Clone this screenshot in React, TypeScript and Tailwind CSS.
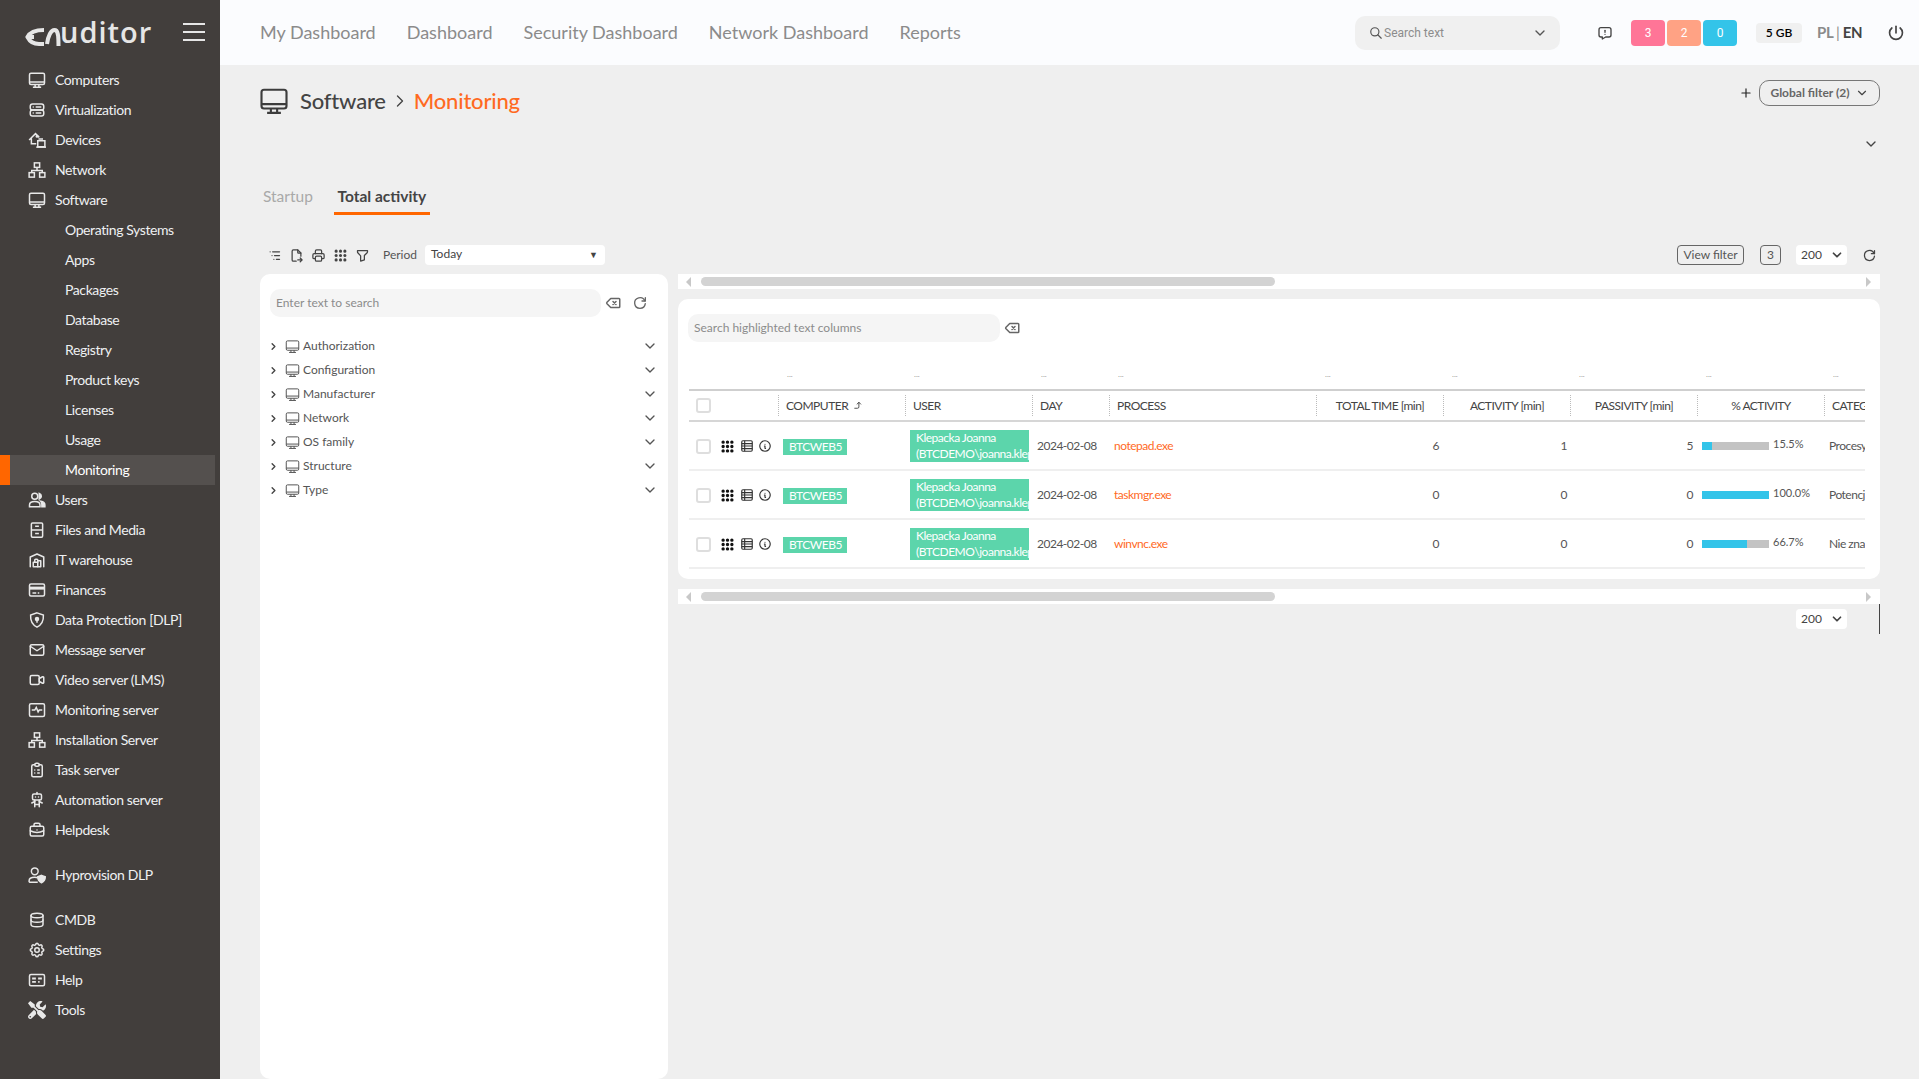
import type { ComponentType, ReactNode } from "react"
import {
  TbBuildingWarehouse,
  TbMail,
  TbVideo,
  TbClipboardList,
  TbRobot,
  TbBriefcase,
  TbDatabase,
  TbSettings,
  TbServer2,
  TbBackspace,
  TbReload,
  TbListTree,
  TbFileExport,
  TbPrinter,
  TbGridDots,
  TbFilter,
  TbInfoCircle,
  TbPower,
  TbMessageReport,
  TbSearch,
  TbChevronDown,
  TbChevronRight,
  TbPlus,
  TbCornerRightUp,
} from "react-icons/tb"
import { FaTools } from "react-icons/fa"

type IconT = ComponentType<{ size?: number; className?: string; strokeWidth?: number }>
type SvgProps = { size?: number; className?: string; strokeWidth?: number }

function svgProps({ size = 18, className, strokeWidth = 2 }: SvgProps) {
  return {
    width: size,
    height: size,
    viewBox: "0 0 24 24",
    fill: "none",
    stroke: "currentColor",
    strokeWidth,
    className,
  }
}

function DesktopIcon(p: SvgProps) {
  return (
    <svg {...svgProps(p)}>
      <rect x="2" y="3" width="20" height="15" rx="2" />
      <path d="M2 14.5h20M9.5 18v3M14.5 18v3M6.5 21.5h11" />
    </svg>
  )
}

function SitemapIcon(p: SvgProps) {
  return (
    <svg {...svgProps(p)}>
      <rect x="8.5" y="2.5" width="7" height="6" />
      <rect x="1.5" y="15.5" width="7" height="6" />
      <rect x="15.5" y="15.5" width="7" height="6" />
      <path d="M12 8.5v4M5 15.5v-3h14v3" />
    </svg>
  )
}

function DevicesIcon(p: SvgProps) {
  return (
    <svg {...svgProps(p)}>
      <path d="M1.5 12L10 3.5l5 5M4.5 10v7H11" />
      <circle cx="12" cy="7" r="1" />
      <path d="M15 11.5v-1h4v1" />
      <rect x="13" y="13" width="9.5" height="8" />
      <path d="M11 21.5h13" />
    </svg>
  )
}

function UsersIcon(p: SvgProps) {
  return (
    <svg {...svgProps(p)}>
      <circle cx="9" cy="7" r="4" />
      <path d="M2 21v-2.5C2 15.5 5 14 9 14s7 1.500 7 4.500V21z" />
      <path d="M15 3.200a4 4 0 0 1 0 7.600z" fill="currentColor" />
      <path d="M17 13.500c3 .5 5.500 2 5.500 5V21H18.500v-3c0-2-.5-3.500-1.500-4.500z" fill="currentColor" />
    </svg>
  )
}

function FilesIcon(p: SvgProps) {
  return (
    <svg {...svgProps(p)}>
      <rect x="4.500" y="2.500" width="15" height="19" rx="1.500" />
      <path d="M4.500 12h15M9.500 7h5M9.500 16.500h5" />
    </svg>
  )
}

function CardIcon(p: SvgProps) {
  return (
    <svg {...svgProps(p)}>
      <rect x="2" y="4" width="20" height="16" rx="2" />
      <path d="M2 9.500h20" strokeWidth="4" />
      <path d="M6 16h5M13 16h2" />
    </svg>
  )
}

function ShieldIcon(p: SvgProps) {
  return (
    <svg {...svgProps(p)}>
      <path d="M12 2.500l8.500 3c.5 7.500-2.500 13-8.500 16-6-3-9-8.500-8.500-16z" />
      <circle cx="12" cy="10.500" r="2" fill="currentColor" />
      <path d="M12 12v3.500" />
    </svg>
  )
}

function PulseIcon(p: SvgProps) {
  return (
    <svg {...svgProps(p)}>
      <rect x="2" y="3.500" width="20" height="17" rx="2" />
      <path d="M5 12h4l2-3.500 2.500 6 1.500-2.500h4" />
    </svg>
  )
}

function HyproIcon(p: SvgProps) {
  return (
    <svg {...svgProps(p)}>
      <circle cx="9" cy="7" r="4.500" />
      <path d="M1.500 21.500v-2c0-3 3-4.500 7.500-4.500 1.500 0 3 .2 4 .6M1.500 21.500H13" />
      <path d="M18 12.500l5 1.800c0 4-1.500 6.500-5 8-3.500-1.500-5-4-5-8z" fill="currentColor" />
    </svg>
  )
}

function HelpIcon(p: SvgProps) {
  return (
    <svg {...svgProps(p)}>
      <rect x="2" y="4.500" width="20" height="15" rx="2" />
      <path d="M5.500 10h5M5.500 14.500h5M13.500 10h5M13.500 14.500h2" strokeWidth="2.500" />
    </svg>
  )
}

function TableIcon(p: SvgProps) {
  return (
    <svg {...svgProps(p)}>
      <rect x="3" y="3" width="18" height="18" rx="2" />
      <path d="M3 8h18M3 12h18M3 16.500h18M8 3v18" />
    </svg>
  )
}

function ToolsIcon({ size = 15 }: SvgProps) {
  return <FaTools size={size} />
}

const menu: { label: string; icon?: IconT; sub?: boolean; active?: boolean; gap?: boolean }[] = [
  { label: "Computers", icon: DesktopIcon },
  { label: "Virtualization", icon: TbServer2 },
  { label: "Devices", icon: DevicesIcon },
  { label: "Network", icon: SitemapIcon },
  { label: "Software", icon: DesktopIcon },
  { label: "Operating Systems", sub: true },
  { label: "Apps", sub: true },
  { label: "Packages", sub: true },
  { label: "Database", sub: true },
  { label: "Registry", sub: true },
  { label: "Product keys", sub: true },
  { label: "Licenses", sub: true },
  { label: "Usage", sub: true },
  { label: "Monitoring", sub: true, active: true },
  { label: "Users", icon: UsersIcon },
  { label: "Files and Media", icon: FilesIcon },
  { label: "IT warehouse", icon: TbBuildingWarehouse },
  { label: "Finances", icon: CardIcon },
  { label: "Data Protection [DLP]", icon: ShieldIcon },
  { label: "Message server", icon: TbMail },
  { label: "Video server (LMS)", icon: TbVideo },
  { label: "Monitoring server", icon: PulseIcon },
  { label: "Installation Server", icon: SitemapIcon },
  { label: "Task server", icon: TbClipboardList },
  { label: "Automation server", icon: TbRobot },
  { label: "Helpdesk", icon: TbBriefcase },
  { label: "Hyprovision DLP", icon: HyproIcon, gap: true },
  { label: "CMDB", icon: TbDatabase, gap: true },
  { label: "Settings", icon: TbSettings },
  { label: "Help", icon: HelpIcon },
  { label: "Tools", icon: ToolsIcon },
]

const treeItems = ["Authorization", "Configuration", "Manufacturer", "Network", "OS family", "Structure", "Type"]

const rows = [
  { process: "notepad.exe", total: 6, activity: 1, passivity: 5, pct: 15.5, category: "Procesy" },
  { process: "taskmgr.exe", total: 0, activity: 0, passivity: 0, pct: 100, category: "Potencjalne" },
  { process: "winvnc.exe", total: 0, activity: 0, passivity: 0, pct: 66.7, category: "Nie znane" },
]

const columns = [
  { w: "w-[89px]", label: "" },
  { w: "w-[127px]", label: "COMPUTER" },
  { w: "w-[127px]", label: "USER" },
  { w: "w-[77px]", label: "DAY" },
  { w: "w-[207px]", label: "PROCESS" },
  { w: "w-[127px]", label: "TOTAL TIME [min]", center: true },
  { w: "w-[127px]", label: "ACTIVITY [min]", center: true },
  { w: "w-[127px]", label: "PASSIVITY [min]", center: true },
  { w: "w-[127px]", label: "% ACTIVITY", center: true },
  { w: "w-[41px]", label: "CATEGORY" },
]

function Logo() {
  return (
    <div className="flex items-center h-[65px] pl-[25px] pr-[15px] justify-between">
      <div className="flex items-center text-[#e6e6e6]">
        <svg width="36" height="18" viewBox="0 0 36 18" fill="none" stroke="currentColor" strokeWidth="4" className="mt-[9px]">
          <path d="M19 2C11 2 5 4 2.500 9C5 14 10 16 14 16H19" />
          <path d="M2.500 9H9" />
          <path d="M22 16C23 8 26 2 29.500 2C33 2 33.500 7 33.500 18" />
        </svg>
        <span className="font-['Open_Sans',sans-serif] font-semibold text-[29px] leading-none tracking-[1px] -mt-[3px] -ml-[1px]">
          uditor
        </span>
      </div>
      <div className="flex flex-col gap-[6px] w-[22px] mt-[-1px]">
        <div className="h-[2px] bg-[#e6e6e6]" />
        <div className="h-[2px] bg-[#e6e6e6]" />
        <div className="h-[2px] bg-[#e6e6e6]" />
      </div>
    </div>
  )
}

function Sidebar() {
  return (
    <aside className="w-[220px] shrink-0 bg-[#423e3c] text-[#eef0f2] text-[14px] tracking-[-0.4px]">
      <Logo />
      {menu.map((m) => {
        const Icon = m.icon
        return (
          <div
            key={m.label}
            className={`flex items-center h-[30px] ${m.gap ? "mt-[15px]" : ""} ${m.sub ? "pl-[65px]" : "pl-[28px]"} ${
              m.active ? "bg-[#54504e] border-l-[10px] border-[#ff6600] w-[215px] !pl-[55px] text-white" : ""
            }`}
          >
            {Icon && (
              <span className="w-[18px] mr-[9px] flex justify-center text-[#e8e8e8]">
                <Icon size={18} strokeWidth={2} />
              </span>
            )}
            <span className="-mt-[1px]">{m.label}</span>
          </div>
        )
      })}
    </aside>
  )
}

function TopBar() {
  return (
    <header className="h-[65px] flex items-center bg-[#fbfcfe] pl-[40px] pr-[13px]">
      <nav className="flex gap-[31px] text-[18px] text-[#8b8b8b]">
        <span>My Dashboard</span>
        <span>Dashboard</span>
        <span>Security Dashboard</span>
        <span>Network Dashboard</span>
        <span>Reports</span>
      </nav>
      <div className="ml-auto flex items-center w-[205px] h-[34px] rounded-[10px] bg-[#f0f0f0] pl-[14px] pr-[12px] text-[#8c8c8c] font-['Roboto',sans-serif] text-[12px]">
        <TbSearch size={14} className="text-[#555] mr-[1px]" />
        <span>Search text</span>
        <TbChevronDown size={16} className="ml-auto text-[#555]" />
      </div>
      <TbMessageReport size={16} className="ml-[37px] mr-[18px] text-[#444]" />
      <div className="flex gap-[2px] text-white text-[12px] font-['Roboto',sans-serif]">
        <span className="w-[34px] h-[26px] rounded-[4px] bg-[#ff7597] flex items-center justify-center">3</span>
        <span className="w-[34px] h-[26px] rounded-[4px] bg-[#ffa284] flex items-center justify-center">2</span>
        <span className="w-[34px] h-[26px] rounded-[4px] bg-[#33c4e9] flex items-center justify-center">0</span>
      </div>
      <span className="ml-[19px] w-[46px] h-[20px] rounded-[4px] bg-[#f0f0f0] flex items-center justify-center text-[12px] font-semibold text-black">
        5 GB
      </span>
      <span className="ml-[15px] w-[44px] whitespace-nowrap text-[15px] font-bold tracking-[-0.4px] text-[#8b8b8b]">
        PL <span className="font-normal">|</span> <span className="text-[#444]">EN</span>
      </span>
      <TbPower size={20} className="ml-[25px] text-[#444]" />
    </header>
  )
}

function Tool({ children, className }: { children: ReactNode; className?: string }) {
  return <span className={`flex items-center text-[#444] ${className ?? ""}`}>{children}</span>
}

function PageSelect() {
  return (
    <div className="w-[51px] h-[20px] bg-white rounded-[4px] flex items-center pl-[5px] pr-[3px] text-[12px] text-[#444]">
      <span>200</span>
      <TbChevronDown size={14} strokeWidth={3} className="ml-auto" />
    </div>
  )
}

function ScrollStrip() {
  return (
    <div className="h-[15px] bg-white flex items-center pl-[8px] pr-[9px]">
      <span className="w-0 h-0 border-y-[5px] border-y-transparent border-r-[5px] border-r-[#c8c8c8]" />
      <div className="ml-[10px] w-[574px] h-[9px] rounded-full bg-[#d3d3d3]" />
      <span className="ml-auto w-0 h-0 border-y-[5px] border-y-transparent border-l-[5px] border-l-[#c8c8c8]" />
    </div>
  )
}

function Checkbox({ className }: { className?: string }) {
  return <span className={`block w-[15px] h-[15px] rounded-[3px] border-2 border-[#dedede] bg-white ${className ?? ""}`} />
}

function TreePanel() {
  return (
    <section className="w-[408px] shrink-0 h-[805px] bg-white rounded-[10px] pt-[15px] px-[10px]">
      <div className="flex items-center">
        <div className="w-[331px] h-[28px] rounded-[10px] bg-[#f5f5f5] flex items-center pl-[6px] text-[12px] text-[#8c8c8c]">
          Enter text to search
        </div>
        <TbBackspace size={18} className="ml-[3px] text-[#666]" />
        <TbReload size={16} className="ml-[10px] text-[#666]" />
      </div>
      <ul className="mt-[17px]">
        {treeItems.map((t) => (
          <li key={t} className="flex items-center h-[24px] text-[12px] text-[#555]">
            <TbChevronRight size={11} strokeWidth={3} className="text-[#444] ml-[-2px]" />
            <span className="ml-[6px] mr-[3px] text-[#555]">
              <DesktopIcon size={15} strokeWidth={1.6} />
            </span>
            <span>{t}</span>
            <TbChevronDown size={16} className="ml-auto text-[#555]" />
          </li>
        ))}
      </ul>
    </section>
  )
}

function ActivityTable() {
  return (
    <div className="w-[1176px] ml-[11px] overflow-hidden mt-[28px]">
      <table className="table-fixed w-[1176px] border-collapse text-[12px] tracking-[-0.5px] text-[#555]">
        <colgroup>
          {columns.map((c, i) => (
            <col key={i} className={c.w} />
          ))}
        </colgroup>
        <thead>
          <tr className="h-[20px] border-b-2 border-[#cfcfcf]">
            {columns.map((c, i) => (
              <th key={i} className="p-0 pl-[9px] align-top font-normal text-left text-[8px] tracking-normal leading-[9px] text-[#999]">
                {i === 0 ? "" : "..."}
              </th>
            ))}
          </tr>
          <tr className="h-[31px] border-b-2 border-[#d6d6d6]">
            <th className="p-0 pl-[7px] text-left font-normal">
              <Checkbox />
            </th>
            {columns.slice(1).map((c) => (
              <th key={c.label} className="p-0 font-normal text-[#444] text-[12px] whitespace-nowrap overflow-hidden">
                <div className={`h-[21px] flex items-center border-l border-dotted border-[#bbb] ${c.center ? "justify-center" : "pl-[7px]"}`}>
                  {c.label}
                  {c.label === "COMPUTER" && <TbCornerRightUp size={11} className="ml-[4px]" />}
                </div>
              </th>
            ))}
          </tr>
        </thead>
        <tbody>
          {rows.map((r) => (
            <tr key={r.process} className="h-[49px] border-b-2 border-[#efefef]">
              <td className="p-0 pl-[7px]">
                <div className="flex items-center mt-[1px]">
                  <Checkbox />
                  <TbGridDots size={15} strokeWidth={3.4} className="ml-[9px] text-[#111]" />
                  <span className="ml-[5px] text-[#333]">
                    <TableIcon size={14} strokeWidth={2} />
                  </span>
                  <TbInfoCircle size={14} className="ml-[4px] text-[#333]" />
                </div>
              </td>
              <td className="p-0 pl-[5px]">
                <span className="block w-[64px] h-[16px] mt-[2px] bg-[#5cd5ab] text-white text-[12px] leading-[16px] pl-[6px]">BTCWEB5</span>
              </td>
              <td className="p-0 pl-[5px]">
                <div className="w-[119px] h-[32px] bg-[#5cd5ab] text-white text-[12px] leading-[16px] pl-[6px] overflow-hidden whitespace-nowrap">
                  Klepacka Joanna
                  <br />
                  (BTCDEMO\joanna.klepacka)
                </div>
              </td>
              <td className="p-0 pl-[5px]">2024-02-08</td>
              <td className="p-0 pl-[5px] text-[#ff6a1f]">{r.process}</td>
              <td className="p-0 pr-[4px] text-right">{r.total}</td>
              <td className="p-0 pr-[3px] text-right">{r.activity}</td>
              <td className="p-0 pr-[4px] text-right">{r.passivity}</td>
              <td className="p-0 pl-[5px]">
                <div className="flex items-center">
                  <div className="w-[67px] h-[8px] bg-[#c3c3c3]">
                    <div className="h-full bg-[#33c4e9]" style={{ width: `${r.pct}%` }} />
                  </div>
                  <span className="ml-[4px] text-[11px] tracking-normal -mt-[2px]">{r.pct.toFixed(1)}%</span>
                </div>
              </td>
              <td className="p-0 pl-[5px] whitespace-nowrap overflow-hidden">{r.category}</td>
            </tr>
          ))}
        </tbody>
      </table>
    </div>
  )
}

export default function App() {
  return (
    <div className="flex h-[1079px] overflow-hidden bg-[#efefef] font-['Lato',sans-serif]">
      <Sidebar />
      <main className="flex-1 min-w-0">
        <TopBar />
        <div className="pl-[40px] pr-[39px]">
          <div className="flex justify-between h-[74px] items-start">
            <div className="flex items-center mt-[21px] text-[22px] leading-[30px] tracking-[-0.2px]">
              <span className="text-[#3c3c3c] -ml-[1px]">
                <DesktopIcon size={30} strokeWidth={1.7} />
              </span>
              <span className="ml-[11px] text-[#444] font-medium">Software</span>
              <TbChevronRight size={20} strokeWidth={1.6} className="mx-[4px] text-[#444]" />
              <span className="text-[#ff6a1f] font-medium">Monitoring</span>
            </div>
            <div className="flex items-center mt-[15px]">
              <TbPlus size={14} className="text-[#222] mr-[6px]" />
              <div className="w-[121px] h-[26px] rounded-[10px] border border-[#777] flex items-center justify-center text-[12px] font-bold text-[#666]">
                Global filter (2)
                <TbChevronDown size={14} className="ml-[5px] text-[#444]" />
              </div>
            </div>
          </div>
          <div className="flex justify-end items-center h-[10px] pr-[1px]">
            <TbChevronDown size={16} className="text-[#444]" />
          </div>
          <div className="flex h-[37px] mt-[29px] items-end pl-[3px] text-[15.5px]">
            <span className="h-[33px] leading-[28px] text-[#a9a9a9]">Startup</span>
            <span className="ml-[21px] h-[33px] leading-[28px] font-bold text-[#444] border-b-[3px] border-[#ff6600] w-[96px] text-center">
              Total activity
            </span>
          </div>
          <div className="flex items-center h-[20px] mt-[30px] mb-[9px]">
            <Tool className="ml-[7px] gap-[7px]">
              <TbListTree size={15} />
              <TbFileExport size={15} />
              <TbPrinter size={15} />
              <TbGridDots size={15} strokeWidth={3} />
              <TbFilter size={15} />
            </Tool>
            <span className="ml-[13px] text-[12px] text-[#555]">Period</span>
            <div className="ml-[8px] w-[180px] h-[20px] bg-white rounded-[4px] flex items-center pl-[6px] pr-[7px] text-[12px] text-[#444]">
              <span className="-mt-[2px]">Today</span>
              <span className="ml-auto text-[9px]">▼</span>
            </div>
            <div className="ml-auto flex items-center">
              <span className="w-[67px] h-[20px] rounded-[4px] border border-[#666] flex items-center justify-center text-[12px] text-[#555]">View filter</span>
              <span className="ml-[16px] w-[21px] h-[20px] rounded-[4px] border border-[#666] flex items-center justify-center text-[12px] text-[#555]">3</span>
              <span className="ml-[15px]">
                <PageSelect />
              </span>
              <TbReload size={15} className="ml-[15px] mr-[3px] text-[#444]" />
            </div>
          </div>
          <div className="flex gap-[10px] items-start">
            <TreePanel />
            <section className="flex-1 min-w-0">
              <ScrollStrip />
              <div className="mt-[10px] bg-white rounded-[10px] h-[280px] pt-[15px]">
                <div className="flex items-center pl-[10px]">
                  <div className="w-[312px] h-[28px] rounded-[10px] bg-[#f5f5f5] flex items-center pl-[6px] text-[12px] text-[#8c8c8c]">
                    Search highlighted text columns
                  </div>
                  <TbBackspace size={18} className="ml-[3px] text-[#666]" />
                </div>
                <ActivityTable />
              </div>
              <div className="mt-[10px]">
                <ScrollStrip />
              </div>
              <div className="flex items-center justify-end h-[30px]">
                <PageSelect />
                <div className="ml-[32px] w-px h-[30px] bg-[#444]" />
              </div>
            </section>
          </div>
        </div>
      </main>
    </div>
  )
}
